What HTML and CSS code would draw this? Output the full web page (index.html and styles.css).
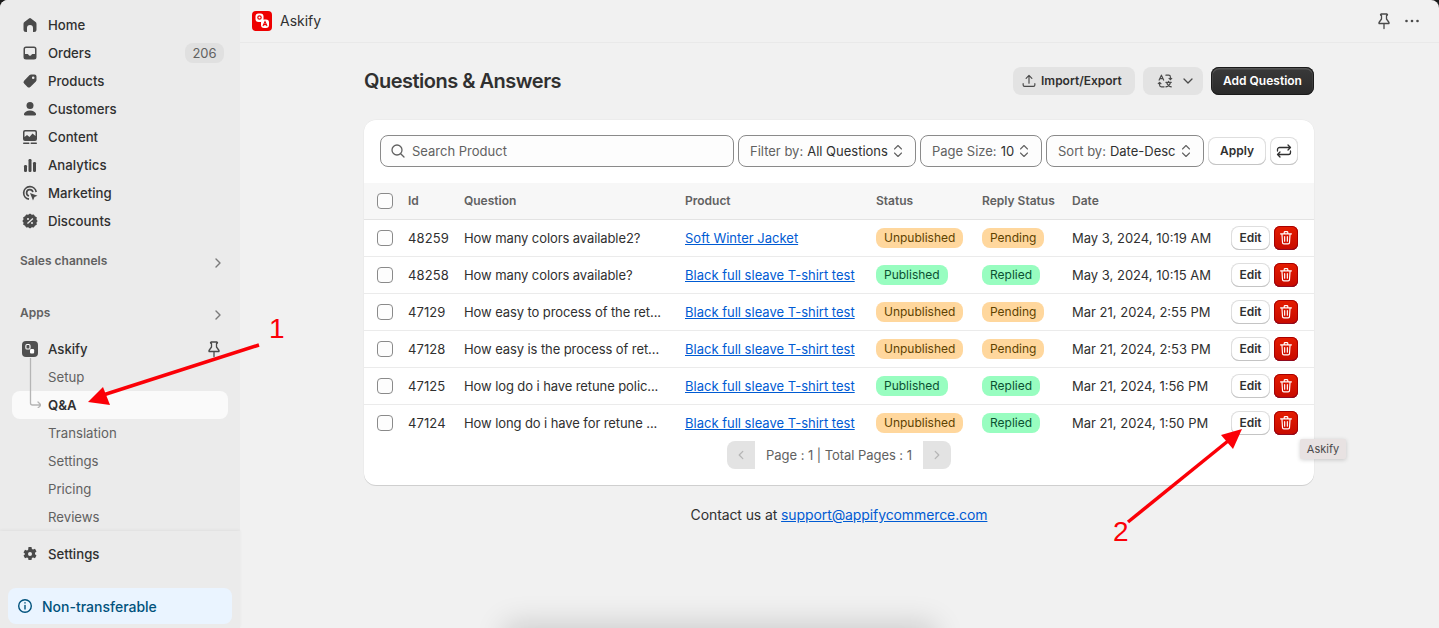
FILE: index.html
```html
<!DOCTYPE html>
<html lang="en">
<head>
<meta charset="utf-8">
<title>Askify - Questions &amp; Answers</title>
<link rel="stylesheet" href="styles.css">
</head>
<body>
<div class="app">
  <aside class="sidebar">
    <div class="side-top">
      <a class="nav-item"><svg class="ico" viewBox="0 0 20 20"><path d="M9 3.400a1.600 1.600 0 0 1 2 0l4.600 3.600c.6.500.9 1.100.9 1.900V14.500a2.500 2.500 0 0 1-2.500 2.500H13V13a3 3 0 0 0-6 0v4H6a2.500 2.500 0 0 1-2.500-2.500V8.900c0-.8.300-1.400.9-1.900z"/></svg><span>Home</span></a>
      <a class="nav-item"><svg class="ico" viewBox="0 0 20 20"><path fill-rule="evenodd" d="M6 3.500h8A2.500 2.500 0 0 1 16.500 6v8a2.500 2.500 0 0 1-2.500 2.500H6A2.500 2.500 0 0 1 3.500 14V6A2.500 2.500 0 0 1 6 3.500zM5 11h2.500c.5 0 .8.300 1 .7.200.6.700 1 1.500 1s1.300-.4 1.500-1c.2-.4.500-.7 1-.7H15V6a1 1 0 0 0-1-1H6a1 1 0 0 0-1 1z"/></svg><span>Orders</span><span class="count">206</span></a>
      <a class="nav-item"><svg class="ico" viewBox="0 0 20 20"><path fill-rule="evenodd" d="M11 3.500h3.500a2 2 0 0 1 2 2V9c0 .6-.2 1.100-.6 1.500l-5.600 5.400a2 2 0 0 1-2.800 0l-3.400-3.400a2 2 0 0 1 0-2.800l5.500-5.600c.4-.4.900-.6 1.400-.6zm2.200 2a1.300 1.300 0 1 0 0 2.600 1.300 1.300 0 0 0 0-2.600z"/></svg><span>Products</span></a>
      <a class="nav-item"><svg class="ico" viewBox="0 0 20 20"><circle cx="10" cy="6.500" r="3.500"/><path d="M10 11.500c3 0 5.300 1.300 6 3.300.3.900-.3 1.700-1.200 1.700H5.200c-.9 0-1.500-.8-1.200-1.700.7-2 3-3.300 6-3.300z"/></svg><span>Customers</span></a>
      <a class="nav-item"><svg class="ico" viewBox="0 0 20 20"><path fill-rule="evenodd" d="M5 3h10a2 2 0 0 1 2 2v7a2 2 0 0 1-2 2H5a2 2 0 0 1-2-2V5a2 2 0 0 1 2-2zm.3 1.500a.8.800 0 0 0-.8.800V10l2.500-2 2.500 2 3-3.500 3 2.500V5.300a.8.800 0 0 0-.8-.8z"/><rect x="3" y="15.500" width="6.500" height="1.500" rx=".7"/><rect x="10.500" y="15.500" width="6.500" height="1.500" rx=".7"/></svg><span>Content</span></a>
      <a class="nav-item"><svg class="ico" viewBox="0 0 20 20"><rect x="4" y="10" width="3" height="7" rx="1.200"/><rect x="8.500" y="4" width="3" height="13" rx="1.200"/><rect x="13" y="7" width="3" height="10" rx="1.200"/></svg><span>Analytics</span></a>
      <a class="nav-item"><svg class="ico" viewBox="0 0 20 20"><path class="ring" d="M9 16.200A6.300 6.300 0 1 1 16.200 9"/><path class="ring" d="M9 13a3.200 3.200 0 1 1 3.900-3.900"/><path d="M10 10l7.500 2.800-3 1.200-1.500 3.500z"/></svg><span>Marketing</span></a>
      <a class="nav-item"><svg class="ico" viewBox="0 0 20 20"><path fill-rule="evenodd" d="M10 2.500l1.800 1.200 2.100-.3 1 1.900 1.900 1-.3 2.100L17.700 10l-1.200 1.600.3 2.100-1.900 1-1 1.900-2.100-.3L10 17.500l-1.800-1.200-2.100.3-1-1.900-1.900-1 .3-2.100L2.300 10l1.200-1.600-.3-2.100 1.900-1 1-1.900 2.100.3zM12.500 7l-5.500 5 .9 1 5.500-5zM8 7a1 1 0 1 0 0 2 1 1 0 0 0 0-2zm4 4a1 1 0 1 0 0 2 1 1 0 0 0 0-2z"/></svg><span>Discounts</span></a>

      <div class="section section-sales"><span>Sales channels</span><svg class="chev" viewBox="0 0 20 20"><path d="M8 6l4 4-4 4"/></svg></div>
      <div class="section section-apps"><span>Apps</span><svg class="chev" viewBox="0 0 20 20"><path d="M8 6l4 4-4 4"/></svg></div>

      <div class="app-block">
        <svg class="connector" viewBox="0 0 20 50"><path d="M9.500 0V45a2 2 0 0 0 2 2H20M17 44l3 3-3 3"/></svg>
        <a class="nav-item"><span class="app-ico"><svg viewBox="0 0 16 16"><rect class="bub" x="2.500" y="2" width="5.500" height="6" rx="1.500"/><rect x="8" y="8" width="5.500" height="6" rx="1.500"/></svg></span><span>Askify</span><svg class="pin" viewBox="0 0 20 20"><path d="M7 3h6a.8.8 0 0 1 0 1.500h-.5V8l2.500 3.500v1H5v-1L7.500 8V4.500H7A.8.8 0 0 1 7 3zM10 12.500v5"/></svg></a>
        <a class="sub-item">Setup</a>
        <a class="sub-item active">Q&amp;A</a>
        <a class="sub-item">Translation</a>
        <a class="sub-item">Settings</a>
        <a class="sub-item">Pricing</a>
        <a class="sub-item">Reviews</a>
      </div>
    </div>
    <div class="side-bottom">
      <a class="nav-item"><svg class="ico" viewBox="0 0 20 20"><path fill-rule="evenodd" d="M8.500 3h3l.4 2 1.200.6 1.900-.8 1.500 2.600-1.500 1.400v1.400l1.500 1.400-1.500 2.600-1.900-.8-1.200.6-.4 2h-3l-.4-2-1.200-.6-1.900.8-1.500-2.600 1.500-1.400V9.800L3.500 8.400 5 5.800l1.900.8 1.200-.6zM10 8a2 2 0 1 0 0 4 2 2 0 0 0 0-4z"/></svg><span>Settings</span></a>
      <div class="notice"><svg viewBox="0 0 20 20"><circle cx="10" cy="10" r="6.300"/><path d="M10 9.500v3.500"/><path d="M10 6.600v.5"/></svg><span>Non-transferable</span></div>
    </div>
  </aside>

  <main class="main">
    <header class="topbar">
      <span class="logo"><svg viewBox="0 0 20 20"><rect x="3.500" y="2.500" width="8" height="8.500" rx="3" fill="#fff"/><rect x="9" y="8.500" width="8" height="8.500" rx="3" fill="#fff"/><circle cx="7.500" cy="6.500" r="1.700" fill="none" stroke="#ee0000" stroke-width="1.200"/><path d="M11 15l2-4.500 2 4.500M11.800 13.600h2.400" fill="none" stroke="#ee0000" stroke-width="1.100"/></svg></span>
      <span class="app-title">Askify</span>
      <span class="top-actions">
        <svg class="pin dark" viewBox="0 0 20 20"><path d="M7 3h6a.8.8 0 0 1 0 1.500h-.5V8l2.500 3.500v1H5v-1L7.500 8V4.500H7A.8.8 0 0 1 7 3zM10 12.500v5"/></svg>
        <svg class="dots" viewBox="0 0 20 20"><circle cx="4.500" cy="10" r="1.300"/><circle cx="10" cy="10" r="1.300"/><circle cx="15.500" cy="10" r="1.300"/></svg>
      </span>
    </header>

    <section class="content">
      <div class="page-head">
        <h1>Questions &amp; Answers</h1>
        <div class="head-actions">
          <button class="btn btn-grey btn-import"><svg viewBox="0 0 20 20"><path d="M10 12.500V4M6.800 7L10 3.800 13.200 7M3.500 13v1.500A1.500 1.500 0 0 0 5 16h10a1.500 1.500 0 0 0 1.500-1.500V13"/></svg>Import/Export</button>
          <button class="btn btn-grey btn-lang"><svg class="lang" viewBox="0 0 20 20"><path d="M3.500 9L6 3.500 8.500 9M4.300 7.400h3.400M11 3.500h3a2 2 0 0 1 2 2v3M14.500 7l1.500 1.500L17.500 7M9 16.500H6a2 2 0 0 1-2-2v-3M2.500 13L4 11.500 5.500 13M11 11.500h6M14 10.500v1M12 12c.6 2 2.500 4 5 4.500M16 12c-.6 2-2.500 4-5 4.500"/></svg><svg class="down" viewBox="0 0 20 20"><path d="M6 8l4 4 4-4"/></svg></button>
          <button class="btn btn-primary">Add Question</button>
        </div>
      </div>

      <div class="card">
        <div class="toolbar">
          <div class="search"><svg viewBox="0 0 20 20"><circle cx="9" cy="9" r="5"/><path d="M12.700 12.700L16 16"/></svg><span>Search Product</span></div>
          <div class="select sel-filter"><span class="lbl">Filter by:</span><span class="val">All Questions</span><svg viewBox="0 0 20 20"><path d="M6.500 8L10 4.500 13.500 8M6.500 12l3.500 3.500 3.500-3.500"/></svg></div>
          <div class="select sel-size"><span class="lbl">Page Size:</span><span class="val">10</span><svg viewBox="0 0 20 20"><path d="M6.500 8L10 4.500 13.500 8M6.500 12l3.500 3.500 3.500-3.500"/></svg></div>
          <div class="select sel-sort"><span class="lbl">Sort by:</span><span class="val">Date-Desc</span><svg viewBox="0 0 20 20"><path d="M6.500 8L10 4.500 13.500 8M6.500 12l3.500 3.500 3.500-3.500"/></svg></div>
          <button class="btn btn-white btn-apply">Apply</button>
          <button class="btn btn-white btn-refresh"><svg viewBox="0 0 20 20"><path d="M3.500 10V8.500a2 2 0 0 1 2-2h11M14 4l2.500 2.500L14 9M16.500 10v1.500a2 2 0 0 1-2 2h-11M6 11l-2.500 2.500L6 16"/></svg></button>
        </div>

        <table class="grid">
          <colgroup><col class="c-check"><col class="c-id"><col class="c-q"><col class="c-p"><col class="c-s"><col class="c-r"><col class="c-d"><col class="c-a"></colgroup>
          <thead>
            <tr><th class="cell-check"><span class="check"></span></th><th>Id</th><th>Question</th><th>Product</th><th>Status</th><th>Reply Status</th><th>Date</th><th></th></tr>
          </thead>
          <tbody>
            <tr><td class="cell-check"><span class="check"></span></td><td class="num">48259</td><td class="q">How many colors available2?</td><td><a class="link">Soft Winter Jacket</a></td><td><span class="badge warn">Unpublished</span></td><td><span class="badge warn">Pending</span></td><td>May 3, 2024, 10:19 AM</td><td class="acts"><button class="btn btn-white btn-edit">Edit</button><button class="btn btn-del"><svg viewBox="0 0 20 20"><path d="M4 5.500h12M8 5V4a1 1 0 0 1 1-1h2a1 1 0 0 1 1 1v1M5.500 5.500l.6 9.500a1.500 1.500 0 0 0 1.500 1.500h4.800a1.500 1.500 0 0 0 1.500-1.500l.6-9.500M8.500 8.500v5M11.500 8.500v5"/></svg></button></td></tr>
            <tr><td class="cell-check"><span class="check"></span></td><td class="num">48258</td><td class="q">How many colors available?</td><td><a class="link">Black full sleave T-shirt test</a></td><td><span class="badge ok">Published</span></td><td><span class="badge ok">Replied</span></td><td>May 3, 2024, 10:15 AM</td><td class="acts"><button class="btn btn-white btn-edit">Edit</button><button class="btn btn-del"><svg viewBox="0 0 20 20"><path d="M4 5.500h12M8 5V4a1 1 0 0 1 1-1h2a1 1 0 0 1 1 1v1M5.500 5.500l.6 9.500a1.500 1.500 0 0 0 1.500 1.500h4.800a1.500 1.500 0 0 0 1.500-1.500l.6-9.500M8.500 8.500v5M11.500 8.500v5"/></svg></button></td></tr>
            <tr><td class="cell-check"><span class="check"></span></td><td class="num">47129</td><td class="q">How easy to process of the ret...</td><td><a class="link">Black full sleave T-shirt test</a></td><td><span class="badge warn">Unpublished</span></td><td><span class="badge warn">Pending</span></td><td>Mar 21, 2024, 2:55 PM</td><td class="acts"><button class="btn btn-white btn-edit">Edit</button><button class="btn btn-del"><svg viewBox="0 0 20 20"><path d="M4 5.500h12M8 5V4a1 1 0 0 1 1-1h2a1 1 0 0 1 1 1v1M5.500 5.500l.6 9.500a1.500 1.500 0 0 0 1.500 1.500h4.800a1.500 1.500 0 0 0 1.500-1.500l.6-9.500M8.500 8.500v5M11.500 8.500v5"/></svg></button></td></tr>
            <tr><td class="cell-check"><span class="check"></span></td><td class="num">47128</td><td class="q">How easy is the process of ret...</td><td><a class="link">Black full sleave T-shirt test</a></td><td><span class="badge warn">Unpublished</span></td><td><span class="badge warn">Pending</span></td><td>Mar 21, 2024, 2:53 PM</td><td class="acts"><button class="btn btn-white btn-edit">Edit</button><button class="btn btn-del"><svg viewBox="0 0 20 20"><path d="M4 5.500h12M8 5V4a1 1 0 0 1 1-1h2a1 1 0 0 1 1 1v1M5.500 5.500l.6 9.500a1.500 1.500 0 0 0 1.500 1.500h4.800a1.500 1.500 0 0 0 1.500-1.500l.6-9.500M8.500 8.500v5M11.500 8.500v5"/></svg></button></td></tr>
            <tr><td class="cell-check"><span class="check"></span></td><td class="num">47125</td><td class="q">How log do i have retune polic...</td><td><a class="link">Black full sleave T-shirt test</a></td><td><span class="badge ok">Published</span></td><td><span class="badge ok">Replied</span></td><td>Mar 21, 2024, 1:56 PM</td><td class="acts"><button class="btn btn-white btn-edit">Edit</button><button class="btn btn-del"><svg viewBox="0 0 20 20"><path d="M4 5.500h12M8 5V4a1 1 0 0 1 1-1h2a1 1 0 0 1 1 1v1M5.500 5.500l.6 9.500a1.500 1.500 0 0 0 1.500 1.500h4.800a1.500 1.500 0 0 0 1.500-1.500l.6-9.500M8.500 8.500v5M11.500 8.500v5"/></svg></button></td></tr>
            <tr><td class="cell-check"><span class="check"></span></td><td class="num">47124</td><td class="q">How long do i have for retune ...</td><td><a class="link">Black full sleave T-shirt test</a></td><td><span class="badge warn">Unpublished</span></td><td><span class="badge ok">Replied</span></td><td>Mar 21, 2024, 1:50 PM</td><td class="acts"><button class="btn btn-white btn-edit">Edit</button><button class="btn btn-del"><svg viewBox="0 0 20 20"><path d="M4 5.500h12M8 5V4a1 1 0 0 1 1-1h2a1 1 0 0 1 1 1v1M5.500 5.500l.6 9.500a1.500 1.500 0 0 0 1.500 1.500h4.800a1.500 1.500 0 0 0 1.500-1.500l.6-9.500M8.500 8.500v5M11.500 8.500v5"/></svg></button></td></tr>
          </tbody>
        </table>

        <div class="pager">
          <span class="pg pg-prev"><svg viewBox="0 0 20 20"><path d="M12 6l-4 4 4 4"/></svg></span>
          <span class="pg-text">Page : 1 | Total Pages : 1</span>
          <span class="pg pg-next"><svg viewBox="0 0 20 20"><path d="M8 6l4 4-4 4"/></svg></span>
        </div>
      </div>

      <p class="contact">Contact us at <a class="link">support@appifycommerce.com</a></p>
    </section>
  </main>

  <div class="tooltip">Askify</div>
  <div class="drop-shadow"></div>

  <svg class="annot" viewBox="0 0 1439 628">
    <path d="M259 345L100 396"/>
    <polygon points="88,402 103,387 110,405"/>
    <path d="M1128 522L1228 441"/>
    <polygon points="1242,429 1221,435 1233,449"/>
  </svg>
  <span class="mark mark-1">1</span>
  <span class="mark mark-2">2</span>
</div>
</body>
</html>
```
FILE: styles.css
```css
* { box-sizing: border-box; }
html, body { margin: 0; padding: 0; height: 100%; background: #1a1a1a; overflow: hidden; }
body { font-family: "Inter", "Liberation Sans", sans-serif; font-size: 13px; color: #303030; }
svg { display: block; flex: none; }
button { font-family: inherit; }
a { color: inherit; }

.app { position: relative; display: flex; width: 1439px; height: 628px; overflow: hidden; border-radius: 8px 8px 0 0; background: #f1f1f1; }

/* Sidebar */
.sidebar { width: 240px; flex: none; display: flex; flex-direction: column; background: #ebebeb; }
.side-top { flex: 1; padding-top: 11px; overflow: hidden; }
.nav-item { display: flex; align-items: center; height: 28px; padding: 0 16px 0 20px; font-size: 13.200px; font-weight: 500; color: #303030; }
.ico { width: 20px; height: 20px; margin-right: 8px; fill: #4a4a4a; }
.ico .ring { fill: none; stroke: #4a4a4a; stroke-width: 1.700; }
.count { margin-left: auto; width: 39px; height: 20px; border-radius: 8px; background: #e0e0e0; color: #616161; font-size: 13px; font-weight: 400; line-height: 20px; text-align: center; }
.section { display: flex; align-items: center; justify-content: space-between; height: 28px; padding: 0 12px 0 20px; font-size: 12px; font-weight: 600; color: #616161; }
.section span { margin-top: -2px; }
.section-sales { margin-top: 12px; }
.section-apps { margin-top: 24px; margin-bottom: 8px; }
.chev { width: 20px; height: 20px; margin-top: 4px; fill: none; stroke: #7a7a7a; stroke-width: 1.400; stroke-linecap: round; stroke-linejoin: round; }
.app-block { position: relative; }
.connector { position: absolute; left: 21px; top: 23px; width: 20px; height: 50px; z-index: 2; fill: none; stroke: #b5b5b5; stroke-width: 1.300; stroke-linecap: round; stroke-linejoin: round; }
.app-ico { display: flex; align-items: center; justify-content: center; width: 16px; height: 16px; margin: 0 10px 0 2px; border-radius: 4px; background: #505050; }
.app-ico svg { width: 12px; height: 12px; fill: #fff; }
.app-ico .bub { fill: none; stroke: #fff; stroke-width: 1.500; }
.pin { width: 20px; height: 20px; margin-left: auto; margin-right: 0; fill: none; stroke: #4a4a4a; stroke-width: 1.300; stroke-linejoin: round; stroke-linecap: round; }
.sub-item { display: flex; align-items: center; height: 28px; margin: 0 12px; padding: 0 0 0 36px; border-radius: 8px; font-size: 13.200px; color: #616161; }
.sub-item.active { background: #fafafa; color: #303030; font-weight: 600; }
.side-bottom { height: 97px; padding-top: 9px; box-shadow: 0 -1px 3px rgba(0,0,0,.05); }
.notice { display: flex; align-items: center; gap: 7px; height: 36px; margin: 20px 8px 0; padding: 0 0 0 8px; border-radius: 8px; background: #eaf4ff; color: #00527c; font-size: 14px; font-weight: 500; }
.notice svg { width: 20px; height: 20px; margin-left: -1px; fill: none; stroke: #00527c; stroke-width: 1.400; stroke-linecap: round; }

/* Main */
.main { flex: 1; min-width: 0; }
.topbar { display: flex; align-items: center; height: 43px; padding: 0 17px 0 12px; border-bottom: 1px solid #e9e9e9; }
.logo { width: 20px; height: 20px; border-radius: 4px; background: #ee0000; }
.logo svg { width: 20px; height: 20px; }
.app-title { margin: -1px 0 0 8px; font-size: 14px; color: #303030; }
.top-actions { display: flex; align-items: center; gap: 8px; margin-left: auto; }
.pin.dark { margin: 0; width: 20px; height: 20px; }
.dots { width: 20px; height: 20px; fill: #4a4a4a; }
.content { width: 950px; margin-left: 124px; }
.page-head { display: flex; align-items: center; justify-content: space-between; height: 28px; margin-top: 24px; }
h1 { margin: 0; font-size: 20px; font-weight: 600; color: #303030; letter-spacing: -.5px; }
.head-actions { display: flex; gap: 8px; }

.btn { display: inline-flex; align-items: center; justify-content: center; border: 0; padding: 0 0 1px; font-size: 12px; font-weight: 600; color: #303030; }
.btn-grey { height: 28px; border-radius: 8px; background: #e3e3e3; }
.btn-import { width: 122px; justify-content: flex-start; gap: 3px; padding-left: 7px; }
.btn-import svg { width: 18px; height: 18px; fill: none; stroke: #4a4a4a; stroke-width: 1.300; stroke-linecap: round; stroke-linejoin: round; }
.btn-lang { width: 60px; justify-content: flex-start; gap: 4px; padding-left: 13px; }
.lang { width: 18px; height: 18px; fill: none; stroke: #4a4a4a; stroke-width: 1.300; stroke-linecap: round; stroke-linejoin: round; }
.down { width: 20px; height: 20px; fill: none; stroke: #4a4a4a; stroke-width: 1.300; stroke-linecap: round; stroke-linejoin: round; }
.btn-primary { width: 103px; height: 28px; border-radius: 8px; color: #fff; background: linear-gradient(#3a3a3a, #2a2a2a); box-shadow: 0 0 0 1px #1a1a1a inset, 0 1px 0 1.500px rgba(255,255,255,.14) inset; }
.btn-white { background: #fff; border-radius: 8px; box-shadow: 0 -1px 0 0 #c4c4c4 inset, 0 0 0 1px #dedede inset; }

.card { margin-top: 25px; height: 365px; border-radius: 12px; background: #fff; box-shadow: 0 1px 0 rgba(0,0,0,.12), 0 0 0 .5px rgba(0,0,0,.04); overflow: hidden; }
.toolbar { display: flex; align-items: center; gap: 4px; height: 63px; padding: 15px 16px 16px; }
.search, .select { display: flex; align-items: center; height: 32px; border: 1px solid #8a8a8a; border-radius: 8px; background: #fdfdfd; }
.search { width: 354px; padding-left: 7px; gap: 4px; color: #616161; }
.search svg { width: 20px; height: 20px; fill: none; stroke: #616161; stroke-width: 1.300; stroke-linecap: round; }
.select { padding: 0 0 0 11px; color: #303030; white-space: nowrap; }
.select .lbl { color: #616161; margin-right: 4px; }
.select svg { width: 20px; height: 20px; margin-left: 0; fill: none; stroke: #616161; stroke-width: 1.100; stroke-linecap: round; stroke-linejoin: round; }
.sel-filter { width: 178px; }
.sel-size { width: 122px; }
.sel-sort { width: 158px; }
.btn-apply { width: 58px; height: 28px; }
.btn-refresh { width: 28px; height: 28px; }
.btn-refresh svg { width: 20px; height: 20px; fill: none; stroke: #303030; stroke-width: 1.300; stroke-linecap: round; stroke-linejoin: round; }

.grid { width: 950px; table-layout: fixed; border-collapse: separate; border-spacing: 0; }
.c-check { width: 44px; } .c-id { width: 56px; } .c-q { width: 221px; } .c-p { width: 191px; }
.c-s { width: 106px; } .c-r { width: 90px; } .c-d { width: 159px; } .c-a { width: 83px; }
.grid th { height: 37px; padding: 0 0 1px; background: #f7f7f7; border-bottom: 1px solid #e3e3e3; text-align: left; font-size: 12px; font-weight: 600; color: #616161; }
.grid td { height: 37px; padding: 0; border-bottom: 1px solid #ebebeb; white-space: nowrap; color: #303030; }
.grid tbody tr:last-child td { height: 36px; border-bottom: 0; }
.grid .cell-check { padding-left: 13px; }
.grid .q { letter-spacing: -.09px; }
.grid .num { letter-spacing: .1px; }
.check { display: block; width: 16px; height: 16px; border: 1px solid #8a8a8a; border-radius: 4px; background: #fdfdfd; }
.link { color: #005bd3; text-decoration: underline; }
.badge { display: inline-block; height: 20px; padding: 0 8px; border-radius: 8px; font-size: 12px; line-height: 20px; vertical-align: middle; }
.warn { background: #ffd79d; color: #5e4200; }
.ok { background: #98fdc0; color: #0c5132; }
.btn-edit { width: 39px; height: 24px; vertical-align: middle; }
.btn-del { width: 24px; height: 24px; margin-left: 4px; vertical-align: middle; border-radius: 6px; background: linear-gradient(#e51c00, #c70a00); box-shadow: 0 -1px 0 0 #8e0b21 inset, 0 0 0 1px #a80000 inset; }
.btn-del svg { width: 18px; height: 18px; fill: none; stroke: #fff; stroke-width: 1.300; stroke-linecap: round; stroke-linejoin: round; }

.pager { display: flex; align-items: center; justify-content: center; height: 28px; }
.pg { display: flex; align-items: center; justify-content: center; width: 28px; height: 28px; background: #e3e3e3; }
.pg-prev { border-radius: 8px 0 0 8px; }
.pg-next { border-radius: 0 8px 8px 0; }
.pg svg { width: 18px; height: 18px; fill: none; stroke: #b5b5b5; stroke-width: 1.400; stroke-linecap: round; stroke-linejoin: round; }
.pg-text { width: 168px; text-align: center; color: #616161; letter-spacing: -.05px; }
.contact { margin: 20px 0 0; text-align: center; font-size: 14px; line-height: 20px; letter-spacing: -.1px; color: #303030; }

/* Overlays */
.tooltip { position: absolute; left: 1300px; top: 439px; width: 46px; height: 20px; background: #e8e2e2; border-radius: 2px; box-shadow: 0 1px 4px rgba(0,0,0,.18); text-align: center; font-size: 11px; line-height: 20px; color: #4a4a4a; }
.drop-shadow { position: absolute; left: 515px; top: 634px; width: 410px; height: 20px; box-shadow: 0 0 30px 10px rgba(0,0,0,.16); }
.annot { position: absolute; inset: 0; width: 1439px; height: 628px; pointer-events: none; }
.annot path { fill: none; stroke: #fb0007; stroke-width: 3.500; }
.annot polygon { fill: #fb0007; }
.mark { position: absolute; font-family: "Liberation Sans", sans-serif; font-size: 28px; line-height: 32px; color: #fb0007; }
.mark-1 { left: 269px; top: 313px; }
.mark-2 { left: 1113px; top: 516px; }
```
